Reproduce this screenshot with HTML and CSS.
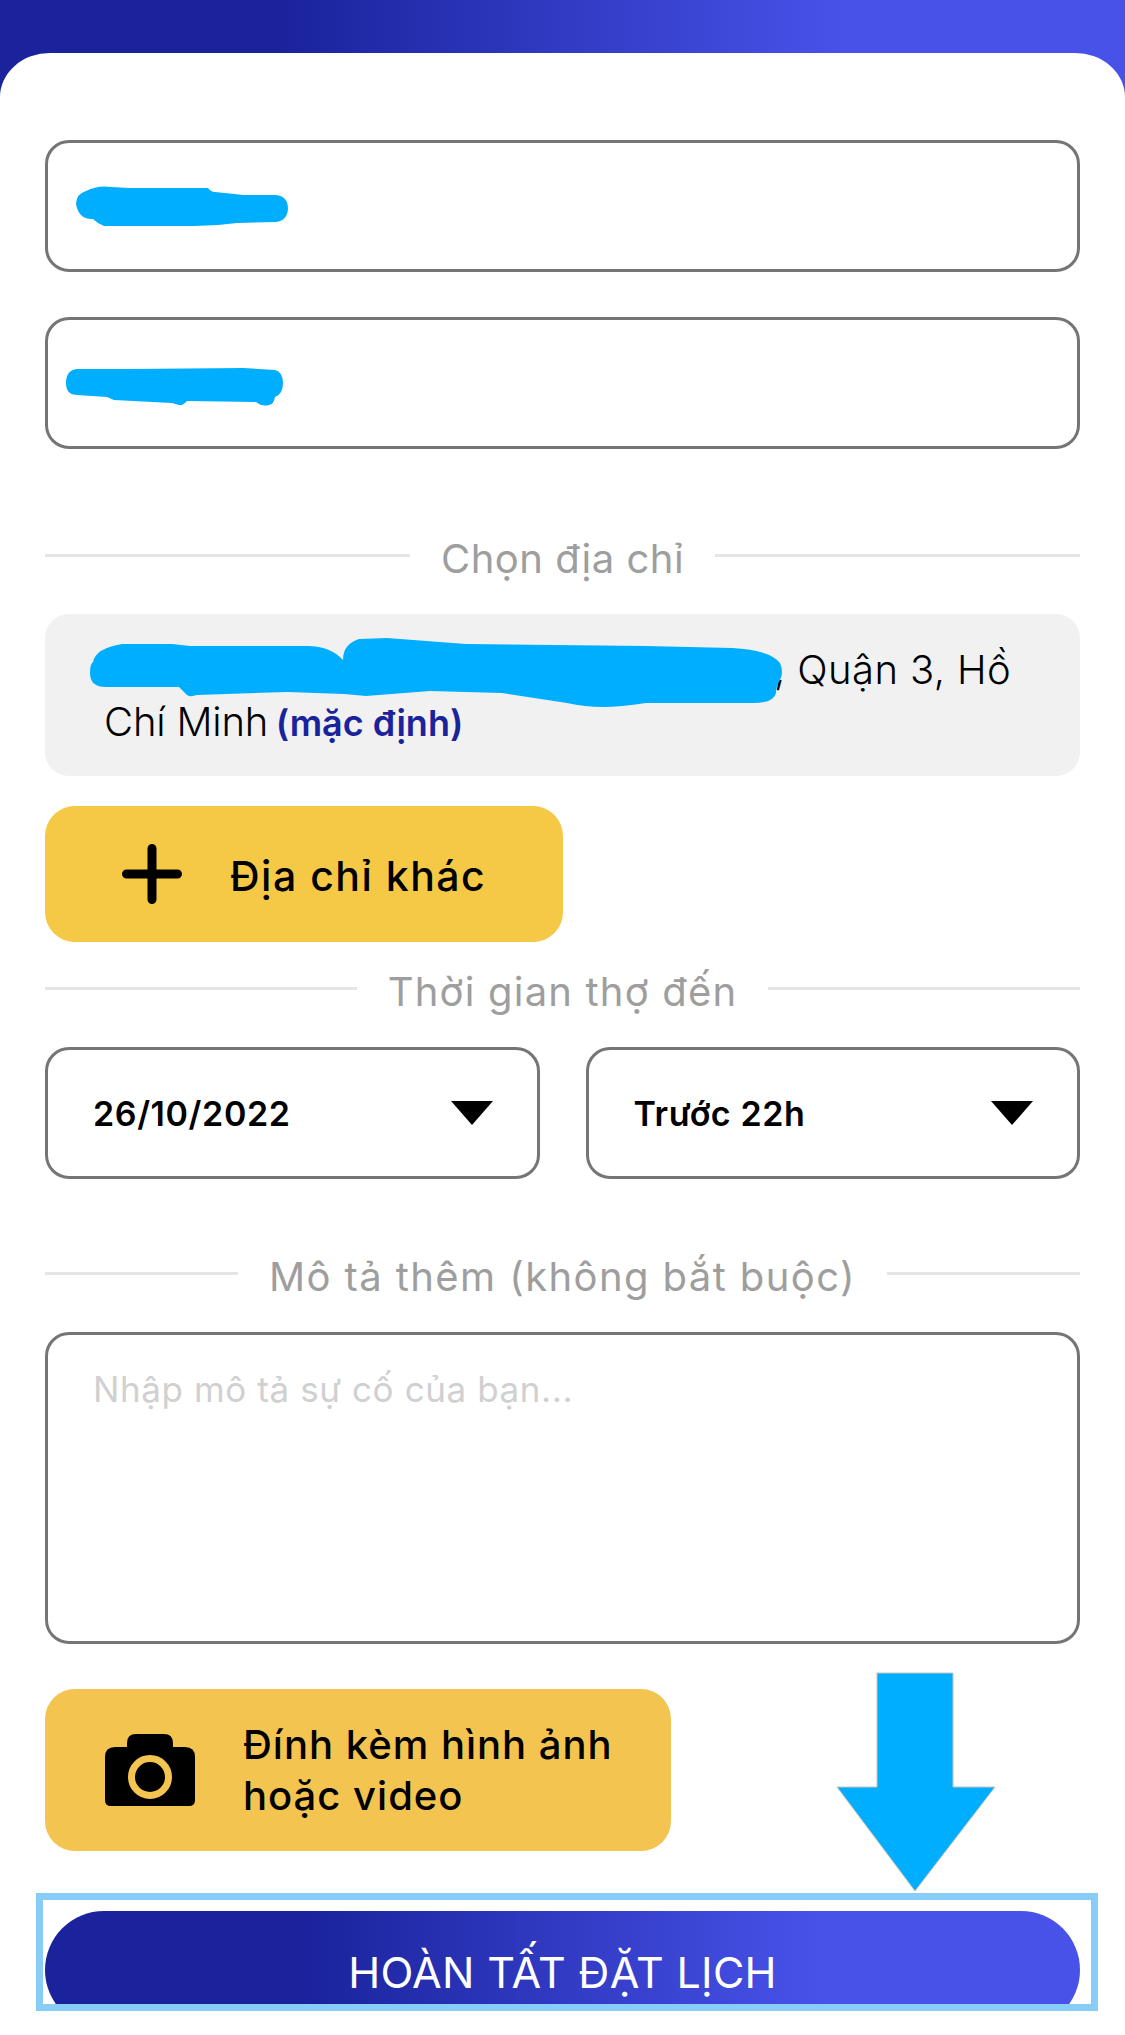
FILE: index.html
```html
<!DOCTYPE html>
<html lang="vi">
<head>
    <meta charset="UTF-8">
    <meta name="viewport" content="width=device-width, initial-scale=1.0">
    <title>Đặt lịch</title>
    <link rel="stylesheet" href="styles.css">
</head>
<body>
    <div class="app">
        <div class="sheet">
            <div class="input-box">
                <svg class="scribble-one" width="212" height="40" viewBox="0 0 212 40"><path class="mau-xoa" d="M0 18 Q0 8 10 5 Q22 -1 35 1 L53 2 L132 2 Q135 6 139 6 L168 9 L200 9 Q212 10 212 23 Q211 35 200 36 L161 37 Q140 40 118 40 L28 40 Q22 38 17 33 Q3 34 0 18 Z"/></svg>
            </div>
            <div class="input-box input-two">
                <svg class="scribble-two" width="218" height="38" viewBox="0 0 218 38"><path class="mau-xoa" d="M0 15 Q0 2 11 1 L63 1 L177 0 L209 2 Q217 4 217 15 Q217 26 209 29 Q208 36 203 37 Q196 39 190 34 L121 33 Q117 38 113 37 L106 35 L48 32 L41 29 L11 27 Q0 27 0 15 Z"/></svg>
            </div>

            <div class="divider divider-dia-chi"><span>Chọn địa chỉ</span></div>

            <div class="address-card">
                <span class="address-hidden">
                    <svg class="scribble-address" width="692" height="69" viewBox="0 0 692 69"><path class="mau-xoa" d="M0 35 Q0 26 3 24 Q6 10 32 6 L82 6 L100 8 L218 8 Q240 8 253 22 Q253 6 269 1 L297 0 L376 6 L556 8 L642 10 Q680 12 690 25 Q694 35 690 42 Q686 48 686 55 Q684 65 663 65 L556 65 Q530 69 513 69 Q495 69 477 65 L412 55 L340 53 L276 58 L254 56 L197 54 L107 57 Q98 60 95 55 L89 49 L18 49 Q0 50 0 35 Z"/></svg>
                </span><span>, Quận 3, Hồ</span><br>
                <span class="chi-minh">Chí Minh</span> <span class="mac-dinh">(mặc định)</span>
            </div>

            <button class="botao-vang botao-dia-chi">
                <svg class="icon-plus" width="60" height="60" viewBox="0 0 60 60"><path d="M30 4.5 V55.5 M4.5 30 H55.5" stroke="#000" stroke-width="9" stroke-linecap="round" fill="none"/></svg>
                <span>Địa chỉ khác</span>
            </button>

            <div class="divider divider-thoi-gian"><span>Thời gian thợ đến</span></div>

            <div class="select-row">
                <div class="select-box"><span>26/10/2022</span><i class="tam-giac"></i></div>
                <div class="select-box"><span>Trước 22h</span><i class="tam-giac"></i></div>
            </div>

            <div class="divider divider-mo-ta"><span>Mô tả thêm (không bắt buộc)</span></div>

            <div class="textarea-box">Nhập mô tả sự cố của bạn...</div>

            <button class="botao-vang botao-dinh-kem">
                <svg class="icon-camera" width="90" height="72" viewBox="0 0 90 72">
                    <path d="M22 13 V9 Q22 0 31 0 H59 Q68 0 68 9 V13 H80 Q90 13 90 23 V66 Q90 72 84 72 H6 Q0 72 0 66 V23 Q0 13 10 13 Z" fill="#000"/>
                    <circle cx="45" cy="43" r="18.5" fill="#000" stroke="#f3c44f" stroke-width="7"/>
                </svg>
                <span>Đính kèm hình ảnh<br>hoặc video</span>
            </button>

            <div class="highlight">
                <button class="botao-hoan-tat">HOÀN TẤT ĐẶT LỊCH</button>
            </div>

            <svg class="seta" width="160" height="221" viewBox="0 0 160 221"><path d="M41 1 H117 V115 H159 L79 219 L1 115 H41 Z" fill="#00aeff" stroke="#c9c2b8" stroke-width="1"/></svg>
        </div>
    </div>
</body>
</html>
```

FILE: styles.css
```css
* {
    margin: 0;
    padding: 0;
    box-sizing: border-box;
}

body {
    font-family: "Inter", "Noto Sans", sans-serif;
    width: 1125px;
    height: 2035px;
    overflow: hidden;
    background: #fff;
}

.app {
    height: 2035px;
    padding-top: 53px;
    background: linear-gradient(90deg, #1a239c 25%, #4852e9 75%) top left / 100% 120px no-repeat;
}

.sheet {
    position: relative;
    height: 1982px;
    padding: 87px 45px 0;
    background: #fff;
    border-radius: 50px 50px 0 0 / 44px 44px 0 0;
}

.mau-xoa {
    fill: #00aeff;
}

.input-box {
    display: flex;
    align-items: center;
    height: 132px;
    padding-left: 28px;
    border: 3px solid #757575;
    border-radius: 24px;
}

.input-two {
    margin-top: 45px;
    padding-left: 18px;
}

.scribble-two {
    margin-top: 8px;
}

.divider {
    display: flex;
    align-items: center;
    gap: 31px;
    height: 50px;
    font-size: 40px;
    line-height: 50px;
    color: #9e9e9e;
}

.divider span {
    padding-top: 8px;
}

.divider::before,
.divider::after {
    content: "";
    flex: 1;
    height: 3px;
    background: #e5e5e5;
}

.divider-dia-chi {
    margin-top: 81px;
    letter-spacing: 0.5px;
}

.divider-thoi-gian {
    margin-top: 21px;
    letter-spacing: 1.2px;
}

.divider-mo-ta {
    margin-top: 69px;
    letter-spacing: 1.4px;
}

.address-card {
    margin-top: 34px;
    padding: 30px 20px 28px 59px;
    height: 162px;
    background: #f1f1f1;
    border-radius: 24px;
    font-size: 40px;
    line-height: 52px;
    letter-spacing: 0.4px;
    color: #000;
    font-weight: 300;
}

.address-hidden {
    position: relative;
    display: inline-block;
    width: 670px;
    height: 1px;
}

.scribble-address {
    position: absolute;
    left: -14px;
    top: -45px;
}

.chi-minh {
    letter-spacing: -0.2px;
}

.mac-dinh {
    margin-left: -4px;
    font-size: 36px;
    font-weight: 600;
    letter-spacing: 0;
    color: #1a239c;
}

.botao-vang {
    display: flex;
    align-items: center;
    border: none;
    color: #000;
    font-family: inherit;
    text-align: left;
    border-radius: 30px;
}

.botao-dia-chi {
    margin-top: 30px;
    width: 518px;
    height: 136px;
    padding-left: 77px;
    gap: 48px;
    background: #f5c945;
    font-size: 41px;
    letter-spacing: 1.5px;
    font-weight: 500;
}

.botao-dia-chi span {
    padding-top: 3px;
}

.botao-dinh-kem {
    margin-top: 45px;
    width: 626px;
    height: 162px;
    padding-left: 60px;
    gap: 48px;
    background: #f3c44f;
    font-size: 40px;
    letter-spacing: 1px;
    line-height: 51px;
    font-weight: 500;
}

.select-row {
    display: flex;
    gap: 46px;
    margin-top: 34px;
}

.select-box {
    flex: 1;
    display: flex;
    align-items: center;
    justify-content: space-between;
    height: 132px;
    padding: 0 44px 0 45px;
    border: 3px solid #757575;
    border-radius: 24px;
    font-size: 34px;
    letter-spacing: 0.6px;
    font-weight: 600;
    color: #000;
}

.tam-giac {
    width: 0;
    height: 0;
    border-left: 21px solid transparent;
    border-right: 21px solid transparent;
    border-top: 24px solid #000;
}

.textarea-box {
    margin-top: 34px;
    height: 312px;
    padding: 32px 45px;
    border: 3px solid #757575;
    border-radius: 24px;
    font-size: 35px;
    letter-spacing: 0.6px;
    line-height: 44px;
    color: #d0d0d0;
}

.highlight {
    width: 1062px;
    height: 118px;
    margin: 42px 0 0 -9px;
    padding: 11px 11px 0 2px;
    border: 7px solid #87cdf7;
    overflow: hidden;
}

.botao-hoan-tat {
    display: block;
    width: 100%;
    height: 118px;
    padding-top: 5px;
    border: none;
    border-radius: 59px;
    background: linear-gradient(90deg, #1a239c 25%, #4852e9 75%);
    color: #fff;
    font-family: inherit;
    font-size: 43px;
    letter-spacing: 0.3px;
    line-height: 113px;
}

.seta {
    position: absolute;
    left: 836px;
    top: 1619px;
}
```
